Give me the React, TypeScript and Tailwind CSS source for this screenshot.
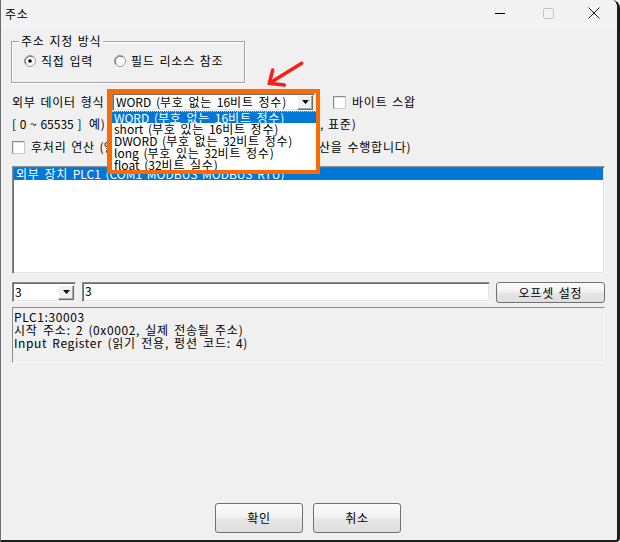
import React from "react";

const font = "font-['Noto_Sans_CJK_KR',sans-serif]";
const sunken =
  "border border-t-[#8c8c8c] border-l-[#8c8c8c] border-b-[#f7f7f7] border-r-[#f7f7f7] shadow-[inset_1px_1px_0_#6b6b6b,inset_-1px_-1px_0_#e3e3e3]";

function K({ t }: { t: string }) {
  const parts = t.split(/([\uAC00-\uD7A3]+)/);
  return (
    <span>
      {parts.map((p, i) =>
        /[\uAC00-\uD7A3]/.test(p) ? (
          <span key={i} className="tracking-[0.8px]">
            {p}
          </span>
        ) : (
          <React.Fragment key={i}>{p}</React.Fragment>
        )
      )}
    </span>
  );
}

function DropBtn() {
  return (
    <div className="flex h-[15px] w-[16px] shrink-0 items-center justify-center border border-t-[#fdfdfd] border-l-[#fdfdfd] border-b-[#6f6f6f] border-r-[#6f6f6f] bg-[#f0f0f0] shadow-[inset_-1px_-1px_0_#a8a8a8]">
      <svg width="7" height="4" viewBox="0 0 7 4">
        <path d="M0 0h7L3.5 4z" fill="#000" />
      </svg>
    </div>
  );
}

function Radio({ checked }: { checked?: boolean }) {
  return (
    <svg width="12" height="12" viewBox="0 0 12 12" className="shrink-0">
      <circle cx="6" cy="6" r="5.5" fill="#fff" stroke="#9a9a9a" />
      <path d="M2.2 9.2A5 5 0 0 1 9.2 2.2" fill="none" stroke="#6a6a6a" strokeWidth="1" />
      {checked && <circle cx="6" cy="6" r="1.8" fill="#000" />}
    </svg>
  );
}

function Check() {
  return (
    <div className="h-[13px] w-[13px] shrink-0 border border-t-[#8a8a8a] border-l-[#8a8a8a] border-b-[#c8c8c8] border-r-[#c8c8c8] bg-white shadow-[inset_1px_1px_0_#e6e6e6]" />
  );
}

function Btn({ label, className }: { label: string; className: string }) {
  return (
    <div
      className={
        "flex items-center justify-center rounded-[3px] border border-[#707070] bg-[linear-gradient(180deg,#fbfbfb_0%,#f2f2f2_48%,#e6e6e6_52%,#dedede_100%)] text-[12px] text-black " +
        className
      }
    >
      <K t={label} />
    </div>
  );
}

export default function App() {
  const items = [
    "WORD (부호 없는 16비트 정수)",
    "short (부호 있는 16비트 정수)",
    "DWORD (부호 없는 32비트 정수)",
    "long (부호 있는 32비트 정수)",
    "float (32비트 실수)",
  ];
  return (
    <div
      className={
        "relative flex h-[542px] w-[620px] flex-col overflow-hidden rounded-tr-[8px] rounded-br-[4px] border-b-2 border-l border-r-[3px] border-b-[#1e1e1e] border-l-[#6e6e6e] border-r-[#1e1e1e] bg-[#f0f0f0] text-[12px] leading-[12px] text-black [word-spacing:2px] " +
        font
      }
    >
      {/* title bar */}
      <div className="flex h-[30px] shrink-0 items-start bg-[#f3f3f3]">
        <div className="pl-[4px] pt-[8px]">
          <K t="주소" />
        </div>
        <div className="ml-auto flex">
          <div className="flex h-[26px] w-[46px] items-center justify-center pr-[4px]">
            <svg width="11" height="11" viewBox="0 0 11 11">
              <path d="M0 5.5h10" stroke="#000" strokeWidth="1" />
            </svg>
          </div>
          <div className="flex h-[26px] w-[46px] items-center justify-center">
            <svg width="11" height="11" viewBox="0 0 11 11">
              <rect x="0.5" y="0.5" width="10" height="10" rx="1" fill="none" stroke="#c4c4c4" />
            </svg>
          </div>
          <div className="flex h-[26px] w-[46px] items-center justify-center">
            <svg width="12" height="12" viewBox="0 0 12 12">
              <path d="M0.5 0.5l11 11M11.5 0.5l-11 11" stroke="#1a1a1a" strokeWidth="1" />
            </svg>
          </div>
        </div>
      </div>

      {/* body */}
      <div className="flex flex-1 flex-col pl-[11px] pr-[12px]">
        <fieldset className="ml-[-1px] mt-[5px] h-[48px] w-[234px] border border-[#a3a3a3] pb-[13px] shadow-[inset_1px_1px_0_#fff,1px_1px_0_#fff]">
          <legend className="ml-[7px] px-[2px] leading-[12px]">
            <K t="주소 지정 방식" />
          </legend>
          <div className="mt-[6px] flex h-[16px] items-center pl-[12px]">
            <Radio checked />
            <span className="ml-[5px]">
              <K t="직접 입력" />
            </span>
            <span className="ml-[21px] flex">
              <Radio />
            </span>
            <span className="ml-[5px]">
              <K t="필드 리소스 참조" />
            </span>
          </div>
        </fieldset>

        {/* row 1 */}
        <div className="mt-[10px] flex h-[18px] items-center">
          <div className="w-[100px]">
            <K t="외부 데이터 형식" />
          </div>
          <div className={"flex h-[18px] w-[203px] items-center bg-white pl-[3px] pr-[1px] " + sunken}>
            <span className="flex-1 whitespace-nowrap">
              <K t="WORD (부호 없는 16비트 정수)" />
            </span>
            <DropBtn />
          </div>
          <div className="ml-[18px] flex items-center">
            <Check />
            <span className="ml-[6px]">
              <K t="바이트 스왑" />
            </span>
          </div>
        </div>

        {/* row 2 */}
        <div className="flex h-[26px] items-center whitespace-pre">
          <div className="w-[308px] [word-spacing:1px]">
            <K t="[ 0 ~ 65535 ]  예)" />
          </div>
          <div>
            <K t=", 표준)" />
          </div>
        </div>

        {/* row 3 */}
        <div className="flex h-[20px] items-center whitespace-pre">
          <div className="flex w-[307px] items-center">
            <Check />
            <span className="ml-[6px]">
              <K t="후처리 연산 (일" />
            </span>
          </div>
          <div>
            <K t="산을 수행합니다)" />
          </div>
        </div>

        {/* list */}
        <div className={"mt-[9px] h-[108px] bg-white p-[1px] " + sunken}>
          <div className="flex h-[12px] items-center whitespace-nowrap bg-[#0078d7] pl-[2px] text-white">
            <K t="외부 장치 PLC1 (COM1 MODBUS MODBUS RTU)" />
          </div>
        </div>

        {/* offset row */}
        <div className="mt-[8px] flex h-[20px] items-stretch">
          <div className={"flex w-[64px] items-center bg-white pl-[2px] pr-[1px] " + sunken}>
            <span className="flex-1">3</span>
            <DropBtn />
          </div>
          <div className={"ml-[6px] flex w-[408px] items-start bg-white pl-[2px] pt-[2px] " + sunken}>3</div>
          <Btn label="오프셋 설정" className="ml-[6px] h-[21px] w-[109px]" />
        </div>

        {/* info */}
        <div className="mt-[5px] h-[56px] whitespace-nowrap border border-t-[#8c8c8c] border-l-[#8c8c8c] border-b-[#f7f7f7] border-r-[#f7f7f7] pl-[1px] pt-[2px] leading-[13px] tracking-[0.6px]">
          <div>PLC1:30003</div>
          <div>
            <K t="시작 주소: 2 (0x0002, 실제 전송될 주소)" />
          </div>
          <div>
            <K t="Input Register (읽기 전용, 펑션 코드: 4)" />
          </div>
        </div>

        <div className="mb-[7px] mt-auto flex justify-center gap-[10px] pr-[1px]">
          <Btn label="확인" className="h-[30px] w-[88px]" />
          <Btn label="취소" className="h-[30px] w-[88px]" />
        </div>
      </div>

      {/* open dropdown list */}
      <div className="absolute left-[111px] top-[111px] w-[204px] bg-white">
        {items.map((t, i) => (
          <div
            key={t}
            className={
              "h-[12px] whitespace-nowrap pl-[2px] leading-[12px] " +
              (i === 0 ? "border-t border-dotted border-[#f3c58a] bg-[#0078d7] text-white" : "")
            }
          >
            <K t={t} />
          </div>
        ))}
      </div>

      {/* orange highlight frame */}
      <div className="pointer-events-none absolute left-[106px] top-[89px] h-[85px] w-[213px] border-y-[4px] border-l-[5px] border-r-[4px] border-[#ff6a00]" />

      {/* red arrow */}
      <svg className="absolute left-[260px] top-[55px]" width="50" height="40" viewBox="0 0 50 40">
        <path d="M40.7 8.3L9.5 27.5" stroke="#ff1a1a" strokeWidth="3.4" strokeLinecap="round" />
        <path d="M11.7 15L8.3 28.3L23.3 30" fill="none" stroke="#ff1a1a" strokeWidth="3.4" strokeLinecap="round" strokeLinejoin="miter" />
      </svg>
    </div>
  );
}
